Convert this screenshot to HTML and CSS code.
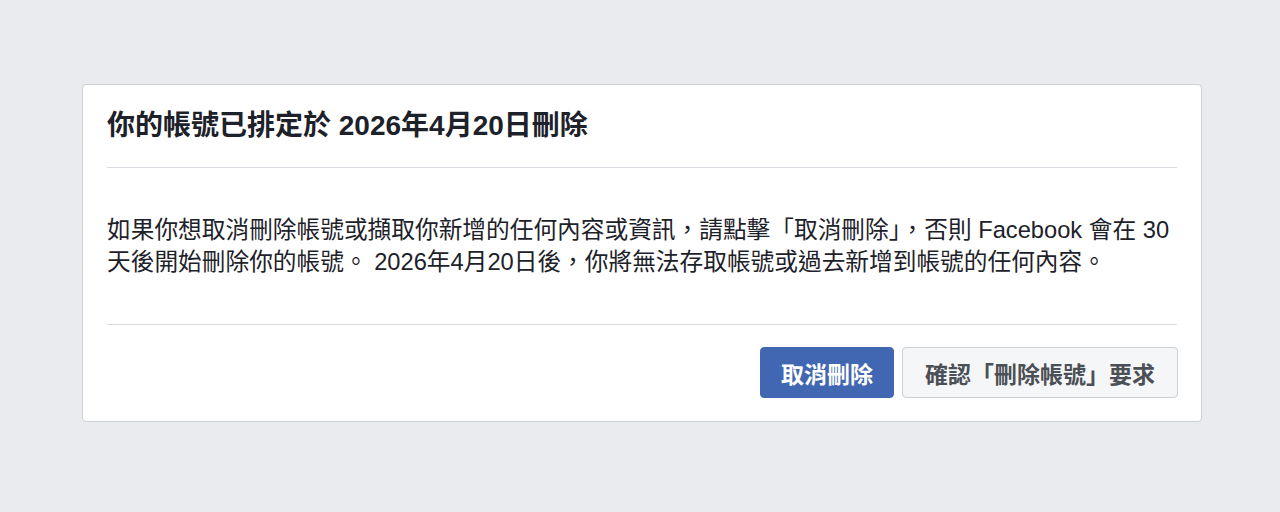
FILE: index.html
```html
<!DOCTYPE html>
<html lang="zh-Hant">
<head>
  <meta charset="UTF-8" />
  <meta name="viewport" content="width=device-width, initial-scale=1.0"/>
  <title>刪除帳號 | Facebook</title>
  <link rel="stylesheet" href="styles.css">
</head>
<body>

  <!-- Deletion notice -->
  <div class="page">
    <div class="notice-card">
      <div class="notice-header">
        <h2>你的帳號已排定於 2026年4月20日刪除</h2>
      </div>

      <div class="notice-body">
        <p>如果你想取消刪除帳號或擷取你新增的任何內容或資訊，請點擊「取消刪除」，否則 Facebook 會在 30<br>天後開始刪除你的帳號。 2026年4月20日後，你將無法存取帳號或過去新增到帳號的任何內容。</p>
      </div>

      <div class="notice-footer">
        <button class="btn btn-primary">取消刪除</button>
        <button class="btn btn-secondary">確認「刪除帳號」要求</button>
      </div>
    </div>
  </div>

</body>
</html>
```

FILE: styles.css
```css
* {
  box-sizing: border-box;
}

body {
  margin: 0;
  background: #e9ebee;
  font-family: "Liberation Sans", "Noto Sans CJK TC", sans-serif;
  color: #1d2129;
}

.page {
  padding-top: 84px;
  padding-left: 82px;
}

.notice-card {
  width: 1120px;
  background: white;
  border: 1px solid #ccd0d5;
  border-radius: 4px;
}

.notice-header {
  margin: 0 24px;
  padding: 24px 0;
  border-bottom: 1px solid #dadde1;
}

.notice-header h2 {
  margin: 0;
  font-size: 28px;
  line-height: 34px;
  font-weight: bold;
}

.notice-body {
  margin: 0 24px;
  padding: 46px 0;
  border-bottom: 1px solid #dadde1;
}

.notice-body p {
  margin: 0;
  font-size: 23.7px;
  line-height: 32px;
}

.notice-footer {
  display: flex;
  justify-content: flex-end;
  gap: 8px;
  padding: 22px 23px 23px;
}

.btn {
  height: 51px;
  padding: 0 20px;
  border-radius: 4px;
  font-family: inherit;
  font-size: 23px;
  font-weight: bold;
  cursor: pointer;
}

.btn-primary {
  background: #4267b2;
  border: 1px solid #4267b2;
  color: white;
}

.btn-secondary {
  padding: 0 22px;
  background: #f5f6f7;
  border: 1px solid #ccd0d5;
  color: #4b4f56;
}
```
